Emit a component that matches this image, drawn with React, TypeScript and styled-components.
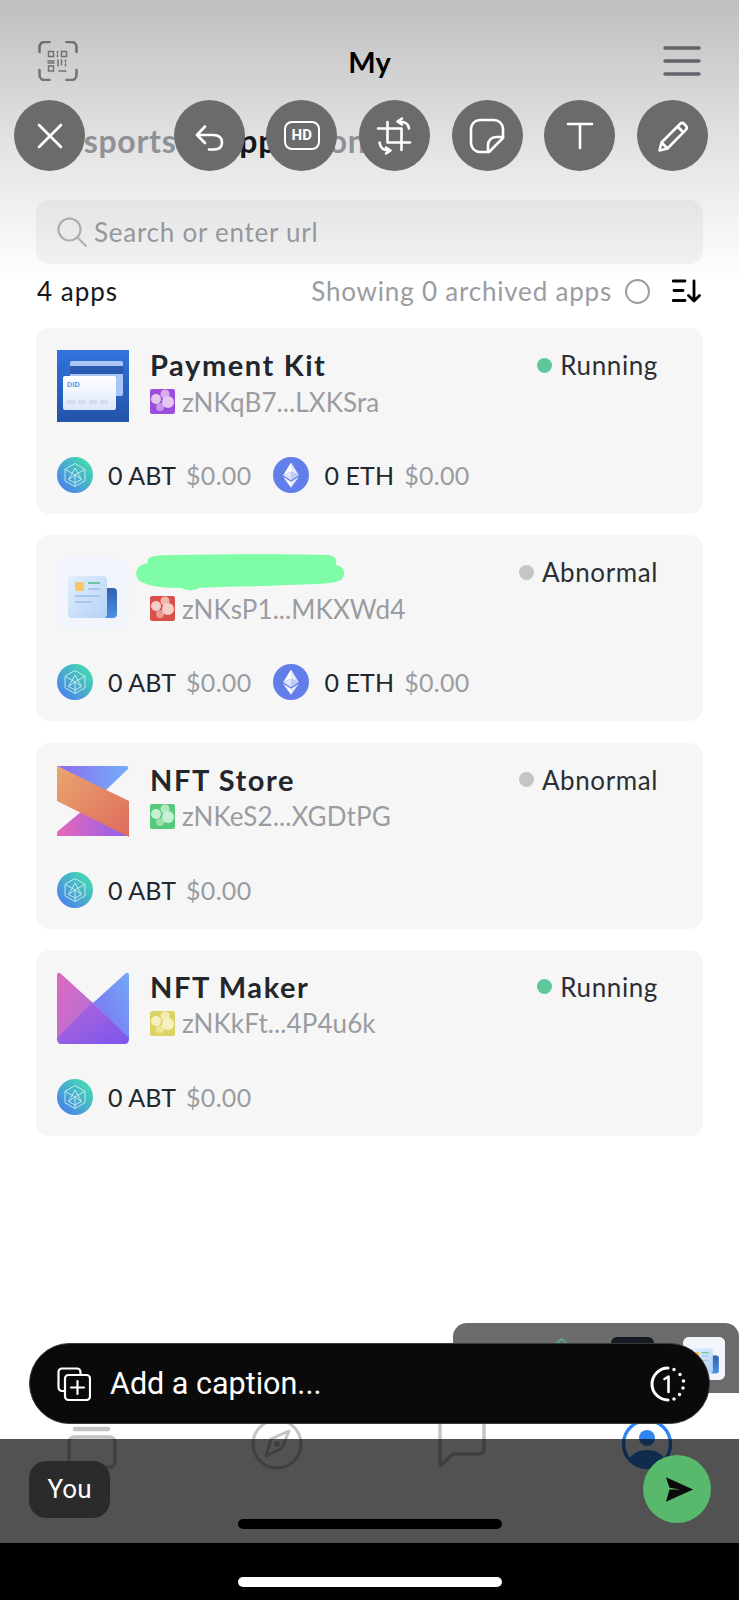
import { ReactNode } from "react";
import styled, { createGlobalStyle } from "styled-components";

const uiFont = `"Lato", "Noto Sans", sans-serif`;
const systemFont = `"Roboto", "Liberation Sans", sans-serif`;

const GlobalStyle = createGlobalStyle`
  html, body {
    margin: 0;
    padding: 0;
    background: #fff;
  }
  #root {
    width: 739px;
    height: 1600px;
  }
`;

const Page = styled.div`
  position: relative;
  width: 739px;
  height: 1600px;
  overflow: hidden;
  background: #fff;
  font-family: ${uiFont};
`;

const AppScreen = styled.div`
  display: flex;
  flex-direction: column;
  height: 100%;
  box-sizing: border-box;
  padding-top: 41px;
`;

const Header = styled.div`
  display: grid;
  grid-template-columns: 1fr auto 1fr;
  align-items: center;
  height: 40px;
  padding: 0 38px;
`;

const HeaderTitle = styled.div`
  font-size: 29px;
  font-weight: 700;
  color: #000;
`;

const HeaderRight = styled.div`
  display: flex;
  justify-content: flex-end;
`;

const Tabs = styled.div`
  display: flex;
  align-items: center;
  gap: 40px;
  height: 38px;
  margin-top: 40px;
  padding-left: 32px;
  font-size: 32px;
  font-weight: 700;
  letter-spacing: 0.7px;
  white-space: nowrap;
`;

const Tab = styled.span<{ $active?: boolean; $pull?: number }>`
  margin-left: ${({ $pull }) => -($pull ?? 0)}px;
  color: ${({ $active }) => ($active ? "#16181b" : "#a1a3a8")};
`;

const SearchBar = styled.div`
  display: flex;
  align-items: center;
  gap: 7px;
  height: 64px;
  margin: 41px 36px 0;
  padding-left: 21px;
  border-radius: 14px;
  background: #f4f4f5;
  color: #9b9da2;
  font-size: 26px;
  letter-spacing: 0.75px;
`;

const MetaRow = styled.div`
  display: flex;
  align-items: center;
  height: 28px;
  margin-top: 13px;
  padding: 0 38px 0 37px;
  font-size: 26px;
`;

const AppCount = styled.span`
  margin-right: auto;
  color: #16181b;
  letter-spacing: 1px;
`;

const ArchivedLabel = styled.span`
  color: #9a9ca1;
  letter-spacing: 0.8px;
`;

const ArchivedRadio = styled.span`
  width: 21px;
  height: 21px;
  margin: 0 22px 0 13px;
  border: 2px solid #9d9d9d;
  border-radius: 50%;
`;

const CardList = styled.div`
  display: flex;
  flex-direction: column;
  gap: 21.3px;
  margin: 23px 36px 0;
`;

const Card = styled.div`
  box-sizing: border-box;
  height: 186px;
  padding: 22px 21px 21px;
  border-radius: 14px;
  background: #f6f6f7;
`;

const CardTop = styled.div`
  display: flex;
  align-items: flex-start;
`;

const LogoBox = styled.div`
  flex: none;
  width: 72px;
  height: 72px;
  margin-right: 21px;
`;

const CardInfo = styled.div`
  display: flex;
  flex-direction: column;
  flex: 1;
  min-width: 0;
`;

const AppName = styled.div`
  height: 30px;
  color: #23272b;
  font-size: 29px;
  font-weight: 700;
  line-height: 30px;
  letter-spacing: 1.6px;
`;

const Redaction = styled.svg`
  display: block;
  overflow: visible;
  margin-left: -14px;
`;

const DidRow = styled.div`
  display: flex;
  align-items: center;
  gap: 7px;
  height: 25px;
  margin-top: 9px;
  color: #9a9ca1;
  font-size: 26px;
  letter-spacing: 0.1px;
`;

const StatusLabel = styled.div`
  display: flex;
  align-items: center;
  gap: 8px;
  height: 30px;
  margin-right: 24px;
  color: #2b2f33;
  font-size: 26px;
  letter-spacing: 0.6px;
`;

const StatusDot = styled.span<{ $color: string }>`
  width: 15px;
  height: 15px;
  border-radius: 50%;
  background: ${({ $color }) => $color};
`;

const CoinRow = styled.div`
  display: flex;
  align-items: center;
  height: 36px;
  margin-top: 35px;
  font-size: 25px;
`;

const CoinAmount = styled.span`
  margin: 0 10px 0 15px;
  color: #23272b;
  letter-spacing: 0.1px;
`;

const CoinValue = styled.span`
  margin-right: 22px;
  color: #9a9ca1;
  letter-spacing: 0.3px;
`;

const TabBar = styled.div`
  display: grid;
  grid-template-columns: repeat(4, 1fr);
  justify-items: center;
  margin-top: auto;
  height: 52px;
`;

const HomeIndicator = styled.div<{ $color: string }>`
  width: 264px;
  height: 10px;
  margin: 0 auto;
  border-radius: 5px;
  background: ${({ $color }) => $color};
`;

const LowerIndicator = styled.div`
  margin: 49px 0 71px;
`;

const Overlay = styled.div`
  position: absolute;
  inset: 0;
  display: flex;
  flex-direction: column;
`;

const Toolbar = styled.div`
  display: flex;
  gap: 21.7px;
  box-sizing: border-box;
  height: 280px;
  padding: 100px 31px 0 14px;
  background: linear-gradient(rgba(0, 0, 0, 0.25), rgba(0, 0, 0, 0.1) 55%, rgba(0, 0, 0, 0));
`;

const ToolButton = styled.div<{ $pushRight?: boolean }>`
  display: flex;
  align-items: center;
  justify-content: center;
  width: 71px;
  height: 71px;
  margin-right: ${({ $pushRight }) => ($pushRight ? "auto" : "0")};
  border-radius: 50%;
  background: #6b6b6b;
  color: #fff;
`;

const HdBadge = styled.div`
  box-sizing: border-box;
  width: 36px;
  height: 29px;
  border: 2.5px solid #fff;
  border-radius: 8px;
  font-family: ${systemFont};
  font-size: 15px;
  font-weight: 700;
  line-height: 24px;
  text-align: center;
`;

const CaptionArea = styled.div`
  position: relative;
  margin-top: auto;
  padding: 0 29px 15px;
`;

const Tray = styled.div`
  position: absolute;
  top: -20px;
  right: 0;
  display: flex;
  gap: 29px;
  box-sizing: border-box;
  width: 286px;
  height: 70px;
  padding: 14px 14px 0 87px;
  border-radius: 14px 14px 0 0;
  background: #6b6b6b;
`;

const TrayThumb = styled.div<{ $background: string }>`
  width: 43px;
  height: 43px;
  overflow: hidden;
  border-radius: 6px;
  background: ${({ $background }) => $background};
`;

const CaptionBar = styled.div`
  position: relative;
  display: flex;
  align-items: center;
  box-sizing: border-box;
  height: 81px;
  padding: 0 23px 0 27px;
  border: 1.5px solid #3a3a3a;
  border-radius: 41px;
  background: #0a0a0a;
  color: #fff;
  font-family: ${systemFont};
  font-size: 30.5px;
`;

const CaptionText = styled.span`
  flex: 1;
  margin-left: 19px;
`;

const SendBand = styled.div`
  display: flex;
  align-items: center;
  justify-content: space-between;
  box-sizing: border-box;
  height: 104px;
  padding: 16px 28px 20px 29px;
  background: rgba(0, 0, 0, 0.68);
`;

const YouChip = styled.div`
  display: flex;
  align-items: center;
  justify-content: center;
  width: 81px;
  height: 57px;
  border-radius: 17px;
  background: #2a2c2b;
  color: #fff;
  font-family: ${systemFont};
  font-size: 26px;
`;

const SendButton = styled.div`
  display: flex;
  align-items: center;
  justify-content: center;
  box-sizing: border-box;
  width: 68px;
  height: 68px;
  padding-left: 5px;
  border-radius: 50%;
  background: #58b86c;
`;

const BlackFooter = styled.div`
  box-sizing: border-box;
  height: 57px;
  padding-top: 34px;
  background: #000;
`;

function IconBox({ children, size = 40 }: { children: ReactNode; size?: number }) {
  return (
    <svg width={size} height={size} viewBox="0 0 40 40" fill="none" stroke="currentColor" strokeWidth="2.6" strokeLinecap="round" strokeLinejoin="round">
      {children}
    </svg>
  );
}

function QrIcon() {
  return (
    <svg width="40" height="40" viewBox="0 0 40 40" fill="none" stroke="#8a8c91" strokeLinecap="round">
      <path strokeWidth="2.6" d="M1.5 11V6a5 5 0 0 1 5-5h5M28.5 1h5a5 5 0 0 1 5 5v5M1.5 29v5a5 5 0 0 0 5 5h5M38.5 29v5a5 5 0 0 1-5 5h-5" />
      <path strokeWidth="1.5" d="M10.5 10.5h5v5h-5zM23.5 10.5h5v5h-5zM10.5 25h5v5h-5zM19.5 10.5v1.5M19.5 14v1.5M10 20h6M10 22h6M20 19v6M23.5 19v5M27.5 19v2M27.5 23v2M21 30h7" />
    </svg>
  );
}

function MenuIcon() {
  return (
    <svg width="38" height="32" viewBox="0 0 38 32" fill="none" stroke="#7a7b84" strokeWidth="3.4" strokeLinecap="round">
      <path d="M2 3h34M2 16h34M2 29h34" />
    </svg>
  );
}

function SearchIcon() {
  return (
    <svg width="30" height="30" viewBox="0 0 30 30" fill="none" stroke="#b4b5bb" strokeWidth="2.2" strokeLinecap="round">
      <circle cx="12.5" cy="12.5" r="11" />
      <path d="M21 21l8 8" />
    </svg>
  );
}

function SortIcon() {
  return (
    <svg width="29" height="24" viewBox="0 0 29 24" fill="none" stroke="#000" strokeWidth="2.8" strokeLinecap="round" strokeLinejoin="round">
      <path d="M1 2h12M2 11.5h9M1 21.5h12M22 2v20M16.5 16.5L22 22l5.5-5.5" />
    </svg>
  );
}

function CoinAbt() {
  return (
    <svg width="36" height="36" viewBox="0 0 36 36" fill="none">
      <defs>
        <linearGradient id="abtCoin" x1="0.1" y1="0.9" x2="0.9" y2="0.1">
          <stop offset="0" stopColor="#4a80ec" />
          <stop offset="1" stopColor="#46dcaf" />
        </linearGradient>
      </defs>
      <circle cx="18" cy="18" r="18" fill="url(#abtCoin)" />
      <g stroke="#d5f7f2" strokeWidth="1" strokeLinejoin="round" opacity="0.85">
        <path d="M18 6.5l10 5.8v11.4l-10 5.8-10-5.8V12.3z" />
        <path d="M18 11l-6.5 11.5L18 26l6.5-3.5zM8 12.3l10 5.7 10-5.7M18 18v11.5M11.5 22.5l6.5-4.5 6.5 4.5" />
      </g>
    </svg>
  );
}

function CoinEth() {
  return (
    <svg width="36" height="36" viewBox="0 0 36 36">
      <circle cx="18" cy="18" r="18" fill="#627eea" />
      <path d="M18 5.5v9.3l7.9 3.5z" fill="#e4e9fb" />
      <path d="M18 5.5l-7.9 12.8 7.9-3.5z" fill="#fff" />
      <path d="M18 14.8v8.4l7.9-4.9z" fill="#c0cbf6" />
      <path d="M18 14.8l-7.9 3.5 7.9 4.9z" fill="#dfe4fa" />
      <path d="M18 24.8v6l7.9-11z" fill="#e4e9fb" />
      <path d="M18 24.8l-7.9-5 7.9 11z" fill="#fff" />
    </svg>
  );
}

function DidBadge({ color, light }: { color: string; light: string }) {
  return (
    <svg width="25" height="25" viewBox="0 0 25 25">
      <rect width="25" height="25" rx="2" fill={color} />
      <circle cx="6" cy="10" r="5" fill={light} />
      <circle cx="15" cy="5" r="4.5" fill={light} opacity="0.8" />
      <circle cx="18" cy="13" r="6" fill={light} />
      <circle cx="10" cy="18" r="4" fill={light} opacity="0.6" />
    </svg>
  );
}

function PaymentLogo() {
  return (
    <svg width="72" height="72" viewBox="0 0 72 72">
      <defs>
        <linearGradient id="payBg" x1="0" y1="0" x2="0" y2="1">
          <stop offset="0" stopColor="#3273dd" />
          <stop offset="1" stopColor="#2353a9" />
        </linearGradient>
        <linearGradient id="payCard" x1="0" y1="0" x2="0" y2="1">
          <stop offset="0" stopColor="#ffffff" />
          <stop offset="1" stopColor="#dde7fb" />
        </linearGradient>
      </defs>
      <rect width="72" height="72" fill="url(#payBg)" />
      <rect x="13" y="11" width="53" height="35" rx="2" fill="#a9c6f6" />
      <rect x="13" y="16" width="53" height="8" fill="#2a5bb0" />
      <rect x="6" y="26" width="53" height="34" rx="2" fill="url(#payCard)" />
      <text x="10" y="37" fontFamily="Roboto, sans-serif" fontSize="8" fontWeight="500" fill="#4f86e2">DID</text>
      <path d="M10 50h8v4h-8zM21 50h8v4h-8zM32 50h8v4h-8zM43 50h8v4h-8z" fill="#d5dded" />
    </svg>
  );
}

function DocLogo({ size = 72 }: { size?: number }) {
  return (
    <svg width={size} height={size} viewBox="0 0 72 72">
      <defs>
        <linearGradient id="docSheet" x1="0" y1="0" x2="1" y2="1">
          <stop offset="0" stopColor="#e2effc" />
          <stop offset="1" stopColor="#b4d2f6" />
        </linearGradient>
        <linearGradient id="docFold" x1="0" y1="0" x2="0" y2="1">
          <stop offset="0" stopColor="#2f62ae" />
          <stop offset="1" stopColor="#4d8fe8" />
        </linearGradient>
      </defs>
      <rect width="72" height="72" rx="12" fill="#f2f6fc" />
      <path d="M48 31h8a4 4 0 0 1 4 4v22a4 4 0 0 1-4 4h-8z" fill="url(#docFold)" />
      <rect x="11" y="19" width="39" height="42" rx="4" fill="url(#docSheet)" />
      <rect x="18" y="25" width="9" height="9" rx="1" fill="#f5c766" />
      <path d="M31 26h12" stroke="#6cc69a" strokeWidth="2" />
      <path d="M31 32h12M18 39h25M18 45h17" stroke="#a8c6ee" strokeWidth="2" />
    </svg>
  );
}

function StoreLogo() {
  return (
    <svg width="72" height="72" viewBox="0 0 72 72">
      <defs>
        <linearGradient id="storeTop" x1="0" y1="0" x2="1" y2="0">
          <stop offset="0" stopColor="#8f6af0" />
          <stop offset="1" stopColor="#74aef9" />
        </linearGradient>
        <linearGradient id="storeBand" x1="0" y1="0" x2="1" y2="1">
          <stop offset="0" stopColor="#e8a66e" />
          <stop offset="1" stopColor="#df6a5c" />
        </linearGradient>
        <linearGradient id="storeBottom" x1="0" y1="0" x2="1" y2="0">
          <stop offset="0" stopColor="#e868b8" />
          <stop offset="1" stopColor="#8c60ee" />
        </linearGradient>
      </defs>
      <path d="M0 1h69q3 0 2 3L48 26 0 1z" fill="url(#storeTop)" />
      <path d="M0 71q-1-3 1-5l24-20 47 25z" fill="url(#storeBottom)" />
      <path d="M0 1l72 35v36L0 36z" fill="url(#storeBand)" />
    </svg>
  );
}

function MakerLogo() {
  return (
    <svg width="72" height="72" viewBox="0 0 72 72">
      <defs>
        <linearGradient id="makerLeft" x1="0" y1="0" x2="1" y2="1">
          <stop offset="0" stopColor="#de68c0" />
          <stop offset="1" stopColor="#b073d8" />
        </linearGradient>
        <linearGradient id="makerRight" x1="1" y1="0" x2="0" y2="1">
          <stop offset="0" stopColor="#74a8f8" />
          <stop offset="1" stopColor="#7a6df0" />
        </linearGradient>
        <linearGradient id="makerBottom" x1="0" y1="0" x2="1" y2="1">
          <stop offset="0" stopColor="#b366d8" />
          <stop offset="1" stopColor="#7b55ee" />
        </linearGradient>
      </defs>
      <path d="M0 3q0-3 3-2l33 30L0 68z" fill="url(#makerLeft)" />
      <path d="M72 3q0-3-3-2L36 31l36 37z" fill="url(#makerRight)" />
      <path d="M35 30l37 36q0 6-4 6H4q-4 0-4-6z" fill="url(#makerBottom)" />
    </svg>
  );
}

function LayersTabIcon() {
  return (
    <svg width="52" height="52" viewBox="0 0 52 52" fill="none" stroke="#c4c4c4" strokeWidth="3.5" strokeLinecap="round">
      <path d="M9 11h33" strokeWidth="4.5" />
      <rect x="3" y="19" width="46" height="30" rx="5" />
    </svg>
  );
}

function CompassTabIcon() {
  return (
    <svg width="52" height="52" viewBox="0 0 52 52" fill="none" stroke="#c4c4c4" strokeWidth="3" strokeLinejoin="round">
      <circle cx="26" cy="26" r="24" />
      <path d="M38 13L31 30l-16 8 5-17z" />
      <circle cx="26" cy="26" r="1.5" />
    </svg>
  );
}

function ChatTabIcon() {
  return (
    <svg width="52" height="52" viewBox="0 0 52 52" fill="none" stroke="#c4c4c4" strokeWidth="3.5" strokeLinejoin="round">
      <path d="M4 -6v54l13-12h26a5 5 0 0 0 5-5V-6z" />
    </svg>
  );
}

function ProfileTabIcon() {
  return (
    <svg width="52" height="52" viewBox="0 0 52 52" fill="none">
      <circle cx="26" cy="26" r="23.5" stroke="#2f86f0" strokeWidth="3.5" />
      <circle cx="26" cy="20" r="8" fill="#2f86f0" />
      <path d="M8 42c3-7 10-10 18-10s15 3 18 10c-9 8-27 8-36 0z" fill="#2f86f0" />
    </svg>
  );
}

type AppRow = {
  name?: string;
  did: string;
  didColor: string;
  didLight: string;
  running: boolean;
  logo: ReactNode;
  hasEth: boolean;
};

const apps: AppRow[] = [
  { name: "Payment Kit", did: "zNKqB7...LXKSra", didColor: "#9b4edb", didLight: "#e4c8f2", running: true, logo: <PaymentLogo />, hasEth: true },
  { did: "zNKsP1...MKXWd4", didColor: "#d9504a", didLight: "#f6cfc8", running: false, logo: <DocLogo />, hasEth: true },
  { name: "NFT Store", did: "zNKeS2...XGDtPG", didColor: "#56ca7a", didLight: "#c8efd2", running: false, logo: <StoreLogo />, hasEth: false },
  { name: "NFT Maker", did: "zNKkFt...4P4u6k", didColor: "#dcd364", didLight: "#f6f1c0", running: true, logo: <MakerLogo />, hasEth: false },
];

function App() {
  return (
    <Page>
      <GlobalStyle />
      <AppScreen>
        <Header>
          <QrIcon />
          <HeaderTitle>My</HeaderTitle>
          <HeaderRight>
            <MenuIcon />
          </HeaderRight>
        </Header>
        <Tabs>
          <Tab>Passports</Tab>
          <Tab $active>Apps</Tab>
          <Tab $pull={28}>Donors</Tab>
        </Tabs>
        <SearchBar>
          <SearchIcon />
          Search or enter url
        </SearchBar>
        <MetaRow>
          <AppCount>4 apps</AppCount>
          <ArchivedLabel>Showing 0 archived apps</ArchivedLabel>
          <ArchivedRadio />
          <SortIcon />
        </MetaRow>
        <CardList>
          {apps.map((app) => (
            <Card key={app.did}>
              <CardTop>
                <LogoBox>{app.logo}</LogoBox>
                <CardInfo>
                  {app.name ? (
                    <AppName>{app.name}</AppName>
                  ) : (
                    <Redaction width="209" height="30" viewBox="0 0 209 30">
                      <path
                        d="M12 6C9-1 20-2 40-2c50-1 110-1 152 0 8 1 9 5 8 10 8 1 10 9 6 14-5 5-24 5-55 6-30 2-60 1-88 3-5 3-12 3-17 0-15 0-30-1-38-5C1 25-2 16 2 11c2-3 6-4 10-5z"
                        fill="#7efca6"
                      />
                    </Redaction>
                  )}
                  <DidRow>
                    <DidBadge color={app.didColor} light={app.didLight} />
                    {app.did}
                  </DidRow>
                </CardInfo>
                <StatusLabel>
                  <StatusDot $color={app.running ? "#5fc79b" : "#c4c5c8"} />
                  {app.running ? "Running" : "Abnormal"}
                </StatusLabel>
              </CardTop>
              <CoinRow>
                <CoinAbt />
                <CoinAmount>0 ABT</CoinAmount>
                <CoinValue>$0.00</CoinValue>
                {app.hasEth && (
                  <>
                    <CoinEth />
                    <CoinAmount>0 ETH</CoinAmount>
                    <CoinValue>$0.00</CoinValue>
                  </>
                )}
              </CoinRow>
            </Card>
          ))}
        </CardList>
        <TabBar>
          <LayersTabIcon />
          <CompassTabIcon />
          <ChatTabIcon />
          <ProfileTabIcon />
        </TabBar>
        <LowerIndicator>
          <HomeIndicator $color="#000" />
        </LowerIndicator>
      </AppScreen>

      <Overlay>
        <Toolbar>
          <ToolButton $pushRight>
            <IconBox>
              <path d="M9 9l22 22M31 9L9 31" />
            </IconBox>
          </ToolButton>
          <ToolButton>
            <IconBox>
              <path d="M16 10.5L8 19l8 8M8 19h16c6 0 9 3 9 7.5s-3 7-8 7h-5" />
            </IconBox>
          </ToolButton>
          <ToolButton>
            <HdBadge>HD</HdBadge>
          </ToolButton>
          <ToolButton>
            <IconBox>
              <path d="M13.5 6v20.5H36M4 12.5h23.5V34" />
              <path d="M28 2.5l-4.5 3 4.5 3M24.5 5.5c6 0 10 2 10.5 7M12 37.5l4.5-3-4.5-3M15.5 34.5c-6 0-9-2-10-8" />
            </IconBox>
          </ToolButton>
          <ToolButton>
            <IconBox>
              <path d="M13 4h14a9 9 0 0 1 9 9v9L22 36h-9a9 9 0 0 1-9-9V13a9 9 0 0 1 9-9z" />
              <path d="M36 21h-7c-4.5 0-8 3.5-8 8v7" />
            </IconBox>
          </ToolButton>
          <ToolButton>
            <IconBox>
              <path d="M8 8h24M20 8v24" />
            </IconBox>
          </ToolButton>
          <ToolButton>
            <IconBox>
              <path d="M6.5 34.5l2-8L27 8a3 3 0 0 1 4.2 0l1.6 1.6a3 3 0 0 1 0 4.2L14.5 32.5zM8.5 26.5l6 6M24.5 10.5l5.5 5.5" />
            </IconBox>
          </ToolButton>
        </Toolbar>

        <CaptionArea>
          <Tray>
            <TrayThumb $background="transparent">
              <svg width="43" height="43" viewBox="0 0 43 43" fill="none" stroke="#5aa892" strokeWidth="2">
                <path d="M8 14L21.5 2 35 14" />
                <path d="M14 14l7.5-6 7.5 6" />
              </svg>
            </TrayThumb>
            <TrayThumb $background="linear-gradient(#14171f, #26365a)" />
            <TrayThumb $background="#f2f6fc">
              <DocLogo size={43} />
            </TrayThumb>
          </Tray>
          <CaptionBar>
            <svg width="34" height="34" viewBox="0 0 34 34" fill="none" stroke="#fff" strokeWidth="2.2" strokeLinecap="round" strokeLinejoin="round">
              <path d="M7 24H5a3.5 3.5 0 0 1-3.5-3.5V5A3.5 3.5 0 0 1 5 1.5h15A3.5 3.5 0 0 1 23.5 5v2" />
              <rect x="8" y="8" width="25" height="25" rx="3.5" />
              <path d="M20.5 14v13M14 20.5h13" />
            </svg>
            <CaptionText>Add a caption...</CaptionText>
            <svg width="36" height="36" viewBox="0 0 36 36" fill="none" stroke="#fff" strokeLinecap="round">
              <path d="M18 2a16 16 0 0 0 0 32" strokeWidth="3" />
              <path d="M24 3.5v.1M30 8.5v.1M33.5 15v.1M33 22v.1M29.5 28.5v.1M24 33v.1" strokeWidth="3.5" />
              <path d="M14.5 13l4-2.5V26" strokeWidth="2.6" strokeLinejoin="round" />
            </svg>
          </CaptionBar>
        </CaptionArea>

        <SendBand>
          <YouChip>You</YouChip>
          <SendButton>
            <svg width="29" height="27" viewBox="0 0 32 32" preserveAspectRatio="none">
              <path d="M1 1.5L31 16 1 30.5l4-14.5h12L5 14z" fill="#0b0b0b" />
            </svg>
          </SendButton>
        </SendBand>
        <BlackFooter>
          <HomeIndicator $color="#fff" />
        </BlackFooter>
      </Overlay>
    </Page>
  );
}

export default App;
